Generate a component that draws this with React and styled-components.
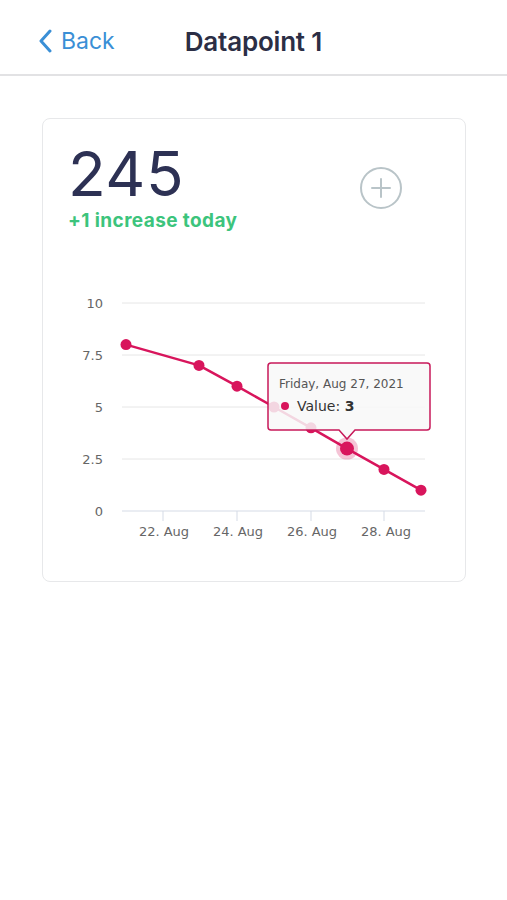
import React from 'react';
import styled, { createGlobalStyle } from 'styled-components';

const GlobalStyle = createGlobalStyle`
  body {
    margin: 0;
    background: #ffffff;
    font-family: Inter, "Noto Sans", sans-serif;
  }
`;

const Page = styled.div`
  width: 507px;
  min-height: 900px;
  background: #fff;
`;

const Header = styled.header`
  display: flex;
  align-items: center;
  height: 76px;
  padding: 8px 0 0 38px;
  border-bottom: 2px solid #e2e2e4;
  box-sizing: border-box;
`;

const BackButton = styled.button`
  display: flex;
  align-items: center;
  gap: 9px;
  border: 0;
  background: none;
  padding: 0;
  color: #3a8fd6;
  font-family: Inter, sans-serif;
  font-size: 23px;
  cursor: pointer;
`;

const Title = styled.h1`
  margin: 0 0 0 70px;
  font-size: 26px;
  font-weight: 600;
  color: #2b2e45;
  letter-spacing: -0.2px;
`;

const Body = styled.main`
  padding: 42px 41px 0 42px;
`;

const Card = styled.section`
  border: 1px solid #e7e8ea;
  border-radius: 8px;
  padding: 25px 0 26px 0;
`;

const TopRow = styled.div`
  display: flex;
  justify-content: space-between;
  align-items: flex-start;
  padding: 0 62px 0 25px;
`;

const Count = styled.div`
  font-size: 62px;
  line-height: 60px;
  color: #2d3154;
  letter-spacing: 0.5px;
`;

const Delta = styled.div`
  margin-top: 6px;
  font-size: 19px;
  line-height: 22px;
  font-weight: 700;
  color: #3cc47c;
  letter-spacing: 0.4px;
`;

const AddButton = styled.button`
  margin-top: 22px;
  width: 44px;
  height: 44px;
  padding: 0;
  border: 0;
  background: none;
  cursor: pointer;
`;

const Chart = styled.svg`
  display: block;
  margin-top: 53px;
  font-family: "DejaVu Sans", Verdana, sans-serif;
`;

const data = [
  [126, 8], [199, 7], [237, 6], [274, 5], [311, 4], [347, 3], [384, 2], [421, 1],
];
const yOf = (v) => 511 - v * 20.8;
const pink = '#d8155c';

export default function App() {
  const linePts = data.map(([x, v]) => `${x},${yOf(v)}`).join(' ');
  return (
    <Page>
      <GlobalStyle />
      <Header>
        <BackButton>
          <svg width="14" height="24" viewBox="0 0 14 24">
            <path d="M12 2 L3 12 L12 22" fill="none" stroke="#3a8fd6" strokeWidth="3" strokeLinecap="round" strokeLinejoin="round" />
          </svg>
          Back
        </BackButton>
        <Title>Datapoint 1</Title>
      </Header>
      <Body>
        <Card>
          <TopRow>
            <div>
              <Count>245</Count>
              <Delta>+1 increase today</Delta>
            </div>
            <AddButton aria-label="add">
              <svg width="44" height="44" viewBox="0 0 44 44">
                <circle cx="22" cy="22" r="20" fill="none" stroke="#b9c4c8" strokeWidth="2" />
                <path d="M22 13 V31 M13 22 H31" stroke="#b9c4c8" strokeWidth="2" strokeLinecap="round" />
              </svg>
            </AddButton>
          </TopRow>
          <Chart width="422" height="270" viewBox="43 285 422 270">
            {[10, 7.5, 5, 2.5].map((v) => (
              <line key={v} x1="122" x2="425" y1={yOf(v)} y2={yOf(v)} stroke="#e6e6e6" strokeWidth="1" />
            ))}
            <line x1="122" x2="425" y1="511" y2="511" stroke="#d5dbe6" strokeWidth="1" />
            {[163, 237, 311, 384].map((x) => (
              <line key={x} x1={x} x2={x} y1="511" y2="521" stroke="#d5dbe6" strokeWidth="1" />
            ))}
            {['10', '7.5', '5', '2.5', '0'].map((t, i) => (
              <text key={t} x="103" y={303 + i * 52 + 5} textAnchor="end" fontSize="13" fill="#666">{t}</text>
            ))}
            {['22. Aug', '24. Aug', '26. Aug', '28. Aug'].map((t, i) => (
              <text key={t} x={164 + i * 74} y="536" textAnchor="middle" fontSize="13" fill="#666">{t}</text>
            ))}
            <polyline points={linePts} fill="none" stroke={pink} strokeWidth="2.5" strokeLinejoin="round" />
            {data.map(([x, v]) => (
              <circle key={x} cx={x} cy={yOf(v)} r="5.5" fill={pink} />
            ))}
            <circle cx="347" cy={yOf(3)} r="11" fill="rgba(216,21,92,0.25)" />
            <circle cx="347" cy={yOf(3)} r="7" fill={pink} />
            <path
              d="M271 363 H427 Q430 363 430 366 V427 Q430 430 427 430 H355 L347 439 L339 430 H271 Q268 430 268 427 V366 Q268 363 271 363 Z"
              fill="rgba(248,248,248,0.85)"
              stroke="#c8195a"
              strokeWidth="1.5"
            />
            <text x="279" y="388" fontSize="12" fill="#555">Friday, Aug 27, 2021</text>
            <circle cx="285" cy="406" r="4" fill={pink} />
            <text x="297" y="411" fontSize="14" fill="#333">
              Value: <tspan fontWeight="bold">3</tspan>
            </text>
          </Chart>
        </Card>
      </Body>
    </Page>
  );
}
